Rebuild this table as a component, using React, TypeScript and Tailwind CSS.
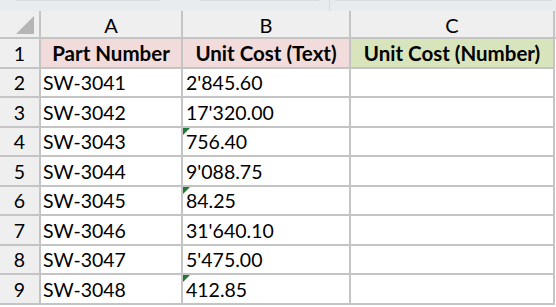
import React from "react";

const rows: { n: number; a: string; b: string; flag: boolean }[] = [
  { n: 2, a: "SW-3041", b: "2'845.60", flag: false },
  { n: 3, a: "SW-3042", b: "17'320.00", flag: false },
  { n: 4, a: "SW-3043", b: "756.40", flag: true },
  { n: 5, a: "SW-3044", b: "9'088.75", flag: false },
  { n: 6, a: "SW-3045", b: "84.25", flag: true },
  { n: 7, a: "SW-3046", b: "31'640.10", flag: false },
  { n: 8, a: "SW-3047", b: "5'475.00", flag: false },
  { n: 9, a: "SW-3048", b: "412.85", flag: true },
];

const line = "border-[#c4c4c4]";

function Flag() {
  return (
    <svg className="absolute left-0 top-0" width="7" height="7" viewBox="0 0 7 7">
      <polygon points="0,0 7,0 0,7" fill="#1f7a35" />
    </svg>
  );
}

export default function App() {
  return (
    <div
      className="w-[556px] h-[307px] overflow-hidden bg-white text-black"
      style={{ fontFamily: "Lato, 'Open Sans', sans-serif" }}
    >
      {/* top strip */}
      <div className="h-[11px] bg-[#e9ecef] flex">
        <div className="w-[16px]" />
        <div className="w-[144px] border-t border-[#d9dbde]" />
        <div className="w-[40px]" />
        <div className="w-[119px] border-t border-[#d9dbde]" />
        <div className="w-[11px] border-r border-[#d6d8db]" />
        <div className="w-[5px]" />
        <div className="w-[217px] border-t border-[#d9dbde]" />
      </div>

      {/* column headers */}
      <div className="flex h-[28px] bg-[#efefef] text-[20px] leading-none">
        <div className={`w-[41px] shrink-0 border-r-2 border-b-2 ${line} flex items-end justify-end pr-[5px] pb-[3px]`}>
          <svg width="18" height="18" viewBox="0 0 18 18">
            <polygon points="18,0 18,18 0,18" fill="#b5b5b5" />
          </svg>
        </div>
        <div className={`w-[142px] shrink-0 border-r-2 border-b-2 ${line} flex items-center justify-center pt-[1px]`}>A</div>
        <div className={`w-[168px] shrink-0 border-r-2 border-b-2 ${line} flex items-center justify-center pt-[1px]`}>B</div>
        <div className={`w-[204px] shrink-0 border-r-2 border-b-2 ${line} flex items-center justify-center pt-[1px]`}>C</div>
        <div className={`flex-1 border-b-2 ${line}`} />
      </div>

      {/* row 1 */}
      <div className="flex h-[29.5px] text-[20.5px] leading-none">
        <div className={`w-[41px] shrink-0 bg-[#efefef] border-r-2 border-b-2 ${line} flex items-center justify-center pt-[1px] text-[19.5px]`}>1</div>
        <div className={`w-[142px] shrink-0 bg-[#f2dcdb] border-r-2 border-b-2 ${line} flex items-center justify-center font-bold pt-[1px]`}>Part Number</div>
        <div className={`w-[168px] shrink-0 bg-[#f2dcdb] border-r-2 border-b-2 ${line} flex items-center justify-center font-bold pt-[1px]`}>Unit Cost (Text)</div>
        <div className={`w-[204px] shrink-0 bg-[#d8e4bc] border-r-2 border-b-2 ${line} flex items-center justify-center font-bold pt-[1px]`}>Unit Cost (Number)</div>
        <div className="flex-1" />
      </div>

      {rows.map((r) => (
        <div key={r.n} className="flex h-[29.5px] text-[19.5px] leading-none">
          <div className={`w-[41px] shrink-0 bg-[#efefef] border-r-2 border-b-2 ${line} flex items-center justify-center pt-[1px]`}>{r.n}</div>
          <div className={`w-[142px] shrink-0 border-r-2 border-b-2 ${line} flex items-center pl-[2px] pt-[1px]`}>{r.a}</div>
          <div className={`relative w-[168px] shrink-0 border-r-2 border-b-2 ${line} flex items-center pl-[3px] pt-[1px]`}>
            {r.flag && <Flag />}
            {r.b}
          </div>
          <div className={`w-[204px] shrink-0 border-r-2 border-b-2 ${line}`} />
          <div className="flex-1" />
        </div>
      ))}
    </div>
  );
}
